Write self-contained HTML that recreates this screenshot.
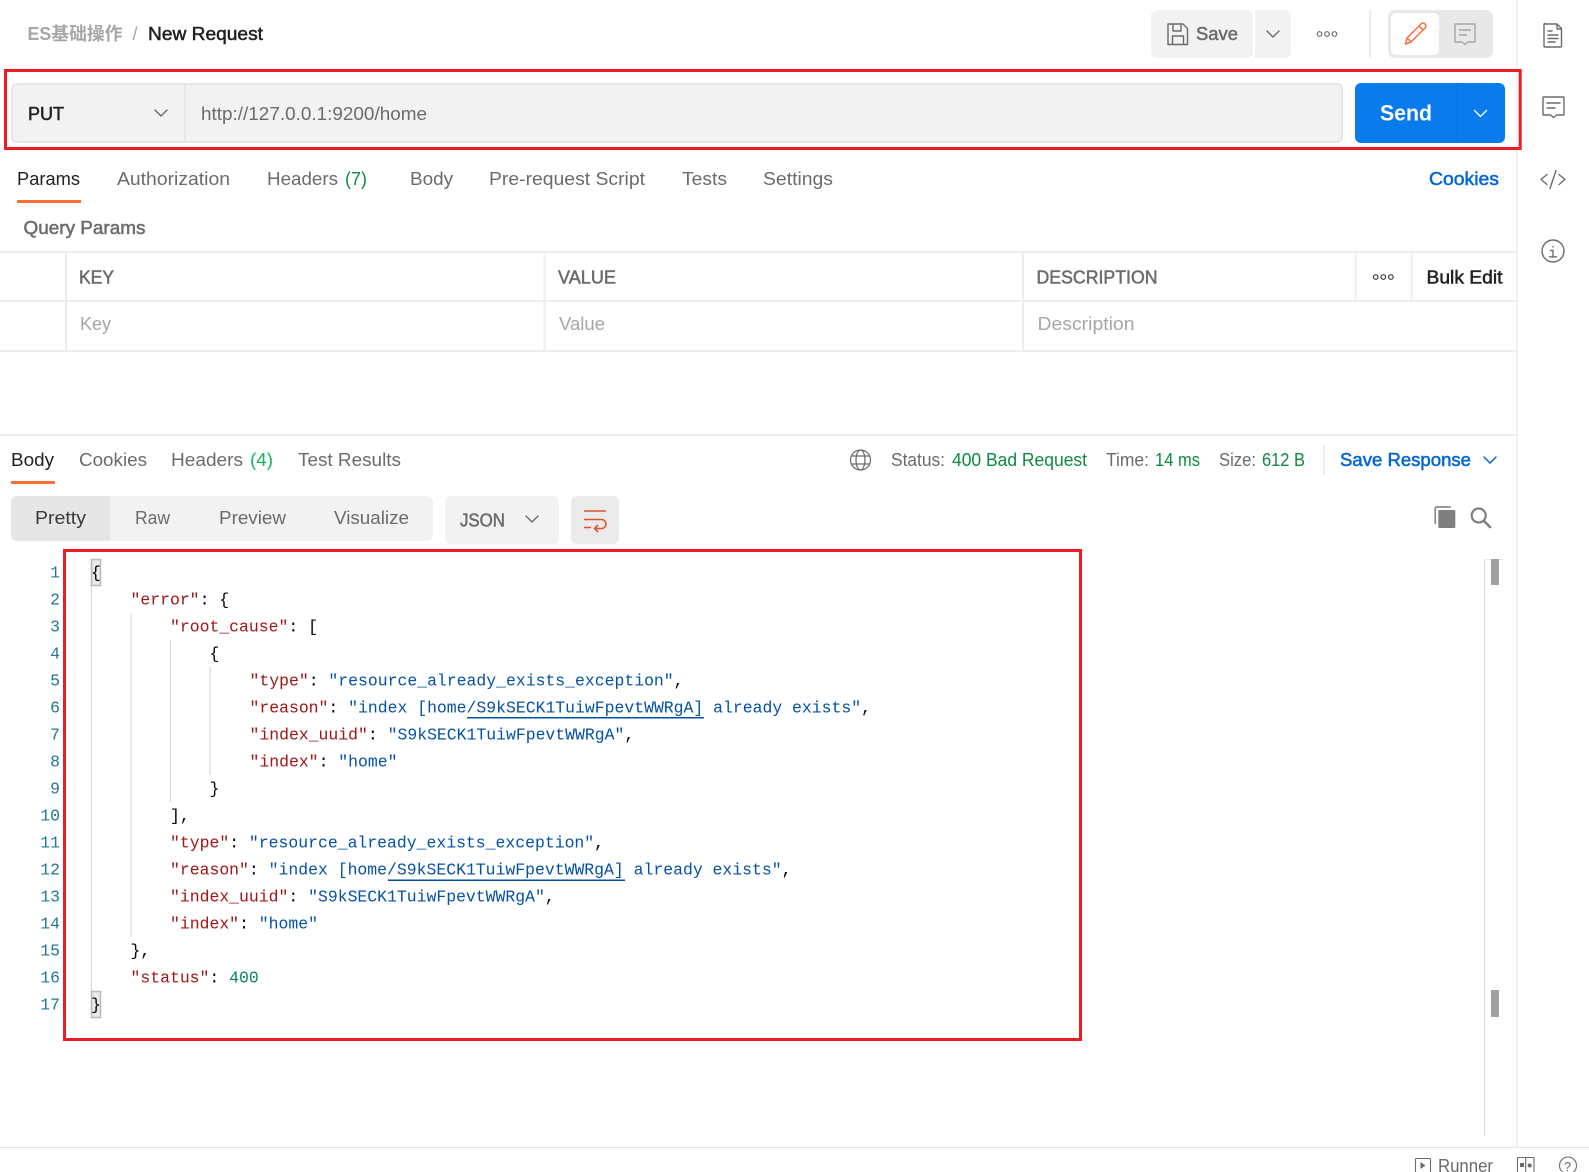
<!DOCTYPE html>
<html lang="en"><head><meta charset="utf-8"><title>New Request</title>
<style>
html,body{margin:0;padding:0;background:#fff;width:1589px;height:1172px;overflow:hidden}
svg{display:block}
text{font-family:"Liberation Sans","Noto Sans CJK SC",sans-serif;font-size:18px;fill:#6b6b6b;white-space:pre}
.m{stroke-width:.5px}
.g{fill:#6b6b6b}.d{fill:#212121}.ph{fill:#a6a6a6}.gr{fill:#0e8a40}.bl{fill:#0265d2}
.g.m{stroke:#6b6b6b}.d.m{stroke:#212121}.bl.m{stroke:#0265d2}
.c text,.n text{font-family:"Liberation Mono",monospace;font-size:16.45px}
.c text{fill:#000}.k{fill:#a31515}.s{fill:#0451a5}.v{fill:#098658}
.n text{fill:#237893;text-anchor:end}
.i{fill:none;stroke:#6b6b6b;stroke-width:1.4;stroke-linecap:round;stroke-linejoin:round}
</style></head><body>
<svg xmlns="http://www.w3.org/2000/svg" width="1589" height="1172" viewBox="0 0 1589 1172">
<rect width="1589" height="1172" fill="#fff"/>

<!-- header -->
<text x="27.5" y="40" textLength="95" lengthAdjust="spacingAndGlyphs" font-weight="700" style="fill:#a6a6a6">ES基础操作</text>
<text x="132.500" y="40" style="fill:#a6a6a6">/</text>
<text x="148" y="40" textLength="115" lengthAdjust="spacingAndGlyphs" class="d m">New Request</text>

<rect x="1151" y="10" width="102" height="48" rx="6" fill="#f2f2f2"/>
<path d="M1255 10h30a6 6 0 0 1 6 6v36a6 6 0 0 1-6 6h-30z" fill="#f2f2f2"/>
<path class="i" d="M1168 24h15l4.500 4.500v16h-19.500zM1173 24v7h8v-7M1172.500 44.500v-8.500h11v8.500"/>
<text x="1196" y="40" textLength="42" lengthAdjust="spacingAndGlyphs" class="g m">Save</text>
<path class="i" d="M1267 31l6 6 6-6"/>
<g class="i" style="stroke-width:1.2"><circle cx="1319.500" cy="34" r="2.300"/><circle cx="1327" cy="34" r="2.300"/><circle cx="1334.500" cy="34" r="2.300"/></g>
<rect x="1369" y="10" width="2" height="48" fill="#ededed"/>
<rect x="1388" y="10" width="105" height="48" rx="7" fill="#e8e8e8"/>
<rect x="1391" y="13" width="48" height="42" rx="5" fill="#fff"/>
<path d="M1405.500 44l1.500-6 14-14a2.800 2.800 0 0 1 4 4l-14 14zM1407 38l4.500 4M1419 26l4 4" fill="none" stroke="#ff6c37" stroke-width="1.500" stroke-linejoin="round"/>
<path d="M1455 24h20v18h-7l-3 2.500-3-2.500h-7zM1459 30h12M1459 35h8" fill="none" stroke="#a6a6a6" stroke-width="1.400" stroke-linejoin="round"/>

<!-- right sidebar -->
<rect x="1516" y="0" width="1.500" height="1147" fill="#ededed"/>
<path class="i" d="M1545 24h12l4.500 4.500v17.500a1 1 0 0 1-1 1h-15.500a1 1 0 0 1-1-1v-21.500a1 1 0 0 1 1-1zM1557 24v5h4.500M1548 31h4M1548 35h10M1548 38.500h10M1548 42h7"/>
<path class="i" d="M1543.500 97h20a.5.500 0 0 1 .5.500v17a.5.500 0 0 1-.5.500h-7l-3 2.500-3-2.500h-7a.5.500 0 0 1-.5-.5v-17a.5.500 0 0 1 .5-.5zM1547 103h13M1547 108h8"/>
<path class="i" d="M1547 174.500l-6 5 6 5M1559 174.500l6 5-6 5M1556 170.500l-6 18"/>
<circle class="i" cx="1553" cy="251" r="11"/>
<path class="i" d="M1553 246.500v.4M1550.500 250.500h2.500v6M1549.500 256.800h7"/>

<!-- URL bar -->
<rect x="12" y="84" width="1330" height="58" rx="5" fill="#f2f2f2" stroke="#e6e6e6" stroke-width="2"/>
<rect x="184" y="84" width="2" height="58" fill="#e6e6e6"/>
<text x="28" y="120" textLength="36" lengthAdjust="spacingAndGlyphs" class="d m">PUT</text>
<path class="i" d="M155 110l6 6 6-6"/>
<text x="201" y="120" textLength="226" lengthAdjust="spacingAndGlyphs" class="g">http://127.0.0.1:9200/home</text>
<rect x="1355" y="83" width="150" height="60" rx="6" fill="#097bed"/>
<rect x="1456.500" y="83" width="1" height="60" fill="#0a6fd6"/>
<text x="1380" y="120.500" textLength="52" lengthAdjust="spacingAndGlyphs" font-weight="700" style="fill:#fff;font-size:22px">Send</text>
<path d="M1474.500 110.500l6 6 6-6" fill="none" stroke="#fff" stroke-width="1.300" stroke-linecap="round" stroke-linejoin="round"/>
<rect x="5.500" y="70.500" width="1514.700" height="78" fill="none" stroke="#ed1c24" stroke-width="3"/>

<!-- request tabs -->
<text x="17" y="185" textLength="63" lengthAdjust="spacingAndGlyphs" class="d">Params</text>
<rect x="17" y="200" width="64" height="3" fill="#ff6c37"/>
<text x="117" y="185" textLength="113" lengthAdjust="spacingAndGlyphs" class="g">Authorization</text>
<text x="267" y="185" textLength="71" lengthAdjust="spacingAndGlyphs" class="g">Headers</text>
<text x="345" y="185" textLength="22" lengthAdjust="spacingAndGlyphs" class="gr">(7)</text>
<text x="410" y="185" textLength="43" lengthAdjust="spacingAndGlyphs" class="g">Body</text>
<text x="489" y="185" textLength="156" lengthAdjust="spacingAndGlyphs" class="g">Pre-request Script</text>
<text x="682" y="185" textLength="45" lengthAdjust="spacingAndGlyphs" class="g">Tests</text>
<text x="763" y="185" textLength="70" lengthAdjust="spacingAndGlyphs" class="g">Settings</text>
<text x="1429" y="185" textLength="70" lengthAdjust="spacingAndGlyphs" class="bl m">Cookies</text>
<text x="23.500" y="234" textLength="122" lengthAdjust="spacingAndGlyphs" class="g m">Query Params</text>

<!-- params table -->
<g fill="#ededed">
<rect x="0" y="251" width="1516" height="2"/><rect x="0" y="300" width="1516" height="2"/><rect x="0" y="350" width="1516" height="2"/>
<rect x="65" y="251" width="2" height="100"/><rect x="543.500" y="251" width="2" height="100"/><rect x="1022" y="251" width="2" height="100"/>
<rect x="1354.500" y="251" width="2" height="50"/><rect x="1410.500" y="251" width="2" height="50"/>
</g>
<text x="79" y="283.500" textLength="35" lengthAdjust="spacingAndGlyphs" class="g m">KEY</text>
<text x="558" y="283.500" textLength="58" lengthAdjust="spacingAndGlyphs" class="g m">VALUE</text>
<text x="1036.500" y="283.500" textLength="121" lengthAdjust="spacingAndGlyphs" class="g m">DESCRIPTION</text>
<g class="i" style="stroke:#3a3a3a;stroke-width:1.2"><circle cx="1375.700" cy="277" r="2.300"/><circle cx="1383.300" cy="277" r="2.300"/><circle cx="1390.900" cy="277" r="2.300"/></g>
<text x="1426.500" y="283.500" textLength="76" lengthAdjust="spacingAndGlyphs" class="d m">Bulk Edit</text>
<text x="80" y="330" textLength="31" lengthAdjust="spacingAndGlyphs" class="ph">Key</text>
<text x="559" y="330" textLength="46" lengthAdjust="spacingAndGlyphs" class="ph">Value</text>
<text x="1037.500" y="330" textLength="97" lengthAdjust="spacingAndGlyphs" class="ph">Description</text>

<!-- response header -->
<rect x="0" y="434" width="1516" height="2" fill="#ededed"/>
<text x="11" y="466" textLength="43" lengthAdjust="spacingAndGlyphs" class="d">Body</text>
<rect x="11" y="481" width="44" height="3" fill="#ff6c37"/>
<text x="79" y="466" textLength="68" lengthAdjust="spacingAndGlyphs" class="g">Cookies</text>
<text x="171" y="466" textLength="72" lengthAdjust="spacingAndGlyphs" class="g">Headers</text>
<text x="250" y="466" textLength="23" lengthAdjust="spacingAndGlyphs" style="fill:#16b35c">(4)</text>
<text x="298" y="466" textLength="103" lengthAdjust="spacingAndGlyphs" class="g">Test Results</text>
<g class="i" style="stroke-width:1.2"><circle cx="860.500" cy="460" r="10"/><ellipse cx="860.500" cy="460" rx="4.500" ry="10"/><path d="M851.500 456h18M851.500 464h18"/></g>
<text x="891" y="466" textLength="54" lengthAdjust="spacingAndGlyphs" class="g">Status:</text>
<text x="952" y="466" textLength="135" lengthAdjust="spacingAndGlyphs" class="gr">400 Bad Request</text>
<text x="1106" y="466" textLength="43" lengthAdjust="spacingAndGlyphs" class="g">Time:</text>
<text x="1155" y="466" textLength="45" lengthAdjust="spacingAndGlyphs" class="gr">14 ms</text>
<text x="1219" y="466" textLength="37" lengthAdjust="spacingAndGlyphs" class="g">Size:</text>
<text x="1262" y="466" textLength="43" lengthAdjust="spacingAndGlyphs" class="gr">612 B</text>
<rect x="1323" y="445" width="2" height="30" fill="#ededed"/>
<text x="1340" y="466" textLength="131" lengthAdjust="spacingAndGlyphs" class="bl m">Save Response</text>
<path d="M1484 457l6 6 6-6" fill="none" stroke="#0265d2" stroke-width="1.500" stroke-linecap="round" stroke-linejoin="round"/>

<!-- view options -->
<rect x="11" y="496" width="422" height="45" rx="6" fill="#f2f2f2"/>
<path d="M17 496h93v45h-93a6 6 0 0 1-6-6v-33a6 6 0 0 1 6-6z" fill="#e6e6e6"/>
<text x="35" y="524" textLength="51" lengthAdjust="spacingAndGlyphs" style="fill:#3a3a3a">Pretty</text>
<text x="135" y="524" textLength="35" lengthAdjust="spacingAndGlyphs" class="g">Raw</text>
<text x="219" y="524" textLength="67" lengthAdjust="spacingAndGlyphs" class="g">Preview</text>
<text x="334" y="524" textLength="75" lengthAdjust="spacingAndGlyphs" class="g">Visualize</text>
<rect x="445" y="496" width="114" height="48" rx="6" fill="#f2f2f2"/>
<text x="460" y="526.500" textLength="45" lengthAdjust="spacingAndGlyphs" class="g m">JSON</text>
<path class="i" d="M526 516l6 6 6-6"/>
<rect x="571" y="496" width="48" height="48" rx="6" fill="#ebebeb"/>
<path d="M584 511h22M584 519.500h17.500a4.500 4.500 0 0 1 0 9h-6.500M598 525l-3.500 3.500 3.500 3.500M584 527.500h7" fill="none" stroke="#e0532a" stroke-width="1.600" stroke-linejoin="round"/>
<path d="M1435.200 524v-15.500a1.500 1.500 0 0 1 1.500-1.500h14" fill="none" stroke="#8a8a8a" stroke-width="1.700"/>
<rect x="1438.300" y="510" width="17" height="18" rx="1" fill="#7f7f7f"/>
<circle cx="1478.700" cy="515.500" r="7" fill="none" stroke="#7f7f7f" stroke-width="2.200"/>
<path d="M1484 521l6 6" stroke="#7f7f7f" stroke-width="2.500" stroke-linecap="round"/>

<!-- indent guides -->
<g fill="#d3d3d3">
<rect x="91" y="586" width="1" height="405"/>
<rect x="130.500" y="613" width="1" height="324"/>
<rect x="170" y="640" width="1" height="162"/>
<rect x="209.500" y="667" width="1" height="108"/>
</g>
<rect x="91.500" y="559.500" width="9" height="26" fill="#e9e9e9" stroke="#b9b9b9" stroke-width="1.500"/>
<rect x="91.500" y="991.500" width="9" height="26" fill="#e9e9e9" stroke="#b9b9b9" stroke-width="1.500"/>

<g transform="translate(-0.5 -0.7)">
<!-- line numbers -->
<g class="n">
<text x="60.500" y="578">1</text><text x="60.500" y="605">2</text><text x="60.500" y="632">3</text><text x="60.500" y="659">4</text><text x="60.500" y="686">5</text><text x="60.500" y="713">6</text><text x="60.500" y="740">7</text><text x="60.500" y="767">8</text><text x="60.500" y="794">9</text><text x="60.500" y="821">10</text><text x="60.500" y="848">11</text><text x="60.500" y="875">12</text><text x="60.500" y="902">13</text><text x="60.500" y="929">14</text><text x="60.500" y="956">15</text><text x="60.500" y="983">16</text><text x="60.500" y="1010">17</text>
</g>

<!-- code -->
<g class="c">
<text x="91.500" y="578">{</text>
<text x="131" y="605"><tspan class="k">"error"</tspan>: {</text>
<text x="170.500" y="632"><tspan class="k">"root_cause"</tspan>: [</text>
<text x="210" y="659">{</text>
<text x="250" y="686"><tspan class="k">"type"</tspan>: <tspan class="s">"resource_already_exists_exception"</tspan>,</text>
<text x="250" y="713"><tspan class="k">"reason"</tspan>: <tspan class="s">"index [home/S9kSECK1TuiwFpevtWWRgA] already exists"</tspan>,</text>
<text x="250" y="740"><tspan class="k">"index_uuid"</tspan>: <tspan class="s">"S9kSECK1TuiwFpevtWWRgA"</tspan>,</text>
<text x="250" y="767"><tspan class="k">"index"</tspan>: <tspan class="s">"home"</tspan></text>
<text x="210" y="794">}</text>
<text x="170.500" y="821">],</text>
<text x="170.500" y="848"><tspan class="k">"type"</tspan>: <tspan class="s">"resource_already_exists_exception"</tspan>,</text>
<text x="170.500" y="875"><tspan class="k">"reason"</tspan>: <tspan class="s">"index [home/S9kSECK1TuiwFpevtWWRgA] already exists"</tspan>,</text>
<text x="170.500" y="902"><tspan class="k">"index_uuid"</tspan>: <tspan class="s">"S9kSECK1TuiwFpevtWWRgA"</tspan>,</text>
<text x="170.500" y="929"><tspan class="k">"index"</tspan>: <tspan class="s">"home"</tspan></text>
<text x="131" y="956">},</text>
<text x="131" y="983"><tspan class="k">"status"</tspan>: <tspan class="v">400</tspan></text>
<text x="91.500" y="1010">}</text>
</g>
</g>
<rect x="467" y="717" width="237" height="1.500" fill="#0451a5"/>
<rect x="388" y="879.500" width="237" height="1.500" fill="#0451a5"/>

<!-- code red box -->
<rect x="64.500" y="550.500" width="1016" height="489" fill="none" stroke="#ed1c24" stroke-width="3"/>

<!-- scrollbar -->
<rect x="1484" y="559" width="1" height="577" fill="#d9d9d9"/>
<rect x="1484" y="559" width="21" height="1" fill="#ededed"/>
<rect x="1491" y="559" width="8" height="26" fill="#a0a0a0"/>
<rect x="1491" y="990" width="8" height="27" fill="#a0a0a0"/>

<!-- footer -->
<rect x="0" y="1147" width="1589" height="1" fill="#e6e6e6"/>
<path class="i" d="M1415.500 1172v-12.500a1 1 0 0 1 1-1h13a1 1 0 0 1 1 1v12.500" style="stroke-width:1.100"/>
<path d="M1420.500 1162l5 3.500-5 3.500z" fill="#6b6b6b"/>
<text x="1438" y="1172" textLength="55" lengthAdjust="spacingAndGlyphs" class="g">Runner</text>
<path class="i" d="M1517.500 1172v-14.500h16.500v14.500M1525.700 1157.500v14.500" style="stroke-width:1.100"/>
<rect x="1520" y="1163" width="4" height="4" fill="#6b6b6b"/><circle cx="1529.700" cy="1165.500" r="2" fill="#6b6b6b"/>
<circle class="i" cx="1568" cy="1165.500" r="8.500" style="stroke-width:1.100"/>
<text x="1564" y="1171" style="font-size:13px">?</text>
</svg>
</body></html>
